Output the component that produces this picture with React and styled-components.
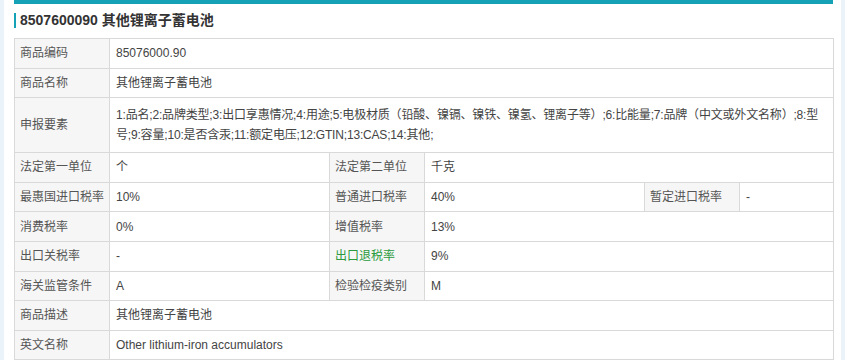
import React from 'react'
import styled, { createGlobalStyle } from 'styled-components'

const GlobalStyle = createGlobalStyle`
  html, body {
    margin: 0;
    padding: 0;
    background: #eaf3f9;
  }
  body {
    font-family: "Liberation Sans", "Noto Sans CJK SC", sans-serif;
    font-size: 12px;
    color: #333;
  }
`

const Page = styled.div`
  margin-left: 4px;
  width: 837px;
  height: 360px;
  overflow: hidden;
  background: #fff;
  padding: 0 8px 0 10px;
  box-sizing: border-box;
`

const TopBar = styled.div`
  height: 4px;
  background: #15a1b6;
`

const Title = styled.h3`
  margin: 9px 0 0;
  height: 15px;
  line-height: 15px;
  border-left: 2px solid #15a1b6;
  padding-left: 4px;
  font-size: 14px;
  font-weight: bold;
  color: #333;
`

const Table = styled.table`
  margin-top: 10px;
  width: 819px;
  border-collapse: collapse;
  table-layout: fixed;
`

const Row = styled.tr`
  height: ${(p) => (p.tall ? '55px' : '29.6px')};
`

const Cell = styled.td`
  border: 1px solid #d9d9d9;
  padding: 0 6px;
  vertical-align: middle;
  line-height: 20px;
  font-size: 12px;
  white-space: nowrap;
  overflow: hidden;
`

const LabelCell = styled(Cell)`
  background: #f6f6f6;
  color: ${(p) => (p.highlight ? '#2a9a3c' : '#555')};
  padding-left: 5px;
  padding-right: 0;
`

const ValueCell = styled(Cell)`
  background: #fff;
  color: #444;
`

const Line = styled.div`
  letter-spacing: -0.18px;
`

const elementLines = [
  '1:品名;2:品牌类型;3:出口享惠情况;4:用途;5:电极材质（铅酸、镍镉、镍铁、镍氢、锂离子等）;6:比能量;7:品牌（中文或外文名称）;8:型',
  '号;9:容量;10:是否含汞;11:额定电压;12:GTIN;13:CAS;14:其他;',
]

export default function App() {
  return (
    <>
      <GlobalStyle />
      <Page>
        <TopBar />
        <Title>8507600090 其他锂离子蓄电池</Title>
        <Table>
          <colgroup>
            <col style={{ width: 95 }} />
            <col style={{ width: 220 }} />
            <col style={{ width: 95 }} />
            <col style={{ width: 220 }} />
            <col style={{ width: 95 }} />
            <col style={{ width: 94 }} />
          </colgroup>
          <tbody>
            <Row>
              <LabelCell>商品编码</LabelCell>
              <ValueCell colSpan={5}>85076000.90</ValueCell>
            </Row>
            <Row>
              <LabelCell>商品名称</LabelCell>
              <ValueCell colSpan={5}>其他锂离子蓄电池</ValueCell>
            </Row>
            <Row tall>
              <LabelCell>申报要素</LabelCell>
              <ValueCell colSpan={5}>
                {elementLines.map((l) => (
                  <Line key={l}>{l}</Line>
                ))}
              </ValueCell>
            </Row>
            <Row>
              <LabelCell>法定第一单位</LabelCell>
              <ValueCell>个</ValueCell>
              <LabelCell>法定第二单位</LabelCell>
              <ValueCell colSpan={3}>千克</ValueCell>
            </Row>
            <Row>
              <LabelCell>最惠国进口税率</LabelCell>
              <ValueCell>10%</ValueCell>
              <LabelCell>普通进口税率</LabelCell>
              <ValueCell>40%</ValueCell>
              <LabelCell>暂定进口税率</LabelCell>
              <ValueCell>-</ValueCell>
            </Row>
            <Row>
              <LabelCell>消费税率</LabelCell>
              <ValueCell>0%</ValueCell>
              <LabelCell>增值税率</LabelCell>
              <ValueCell colSpan={3}>13%</ValueCell>
            </Row>
            <Row>
              <LabelCell>出口关税率</LabelCell>
              <ValueCell>-</ValueCell>
              <LabelCell highlight>出口退税率</LabelCell>
              <ValueCell colSpan={3}>9%</ValueCell>
            </Row>
            <Row>
              <LabelCell>海关监管条件</LabelCell>
              <ValueCell>A</ValueCell>
              <LabelCell>检验检疫类别</LabelCell>
              <ValueCell colSpan={3}>M</ValueCell>
            </Row>
            <Row>
              <LabelCell>商品描述</LabelCell>
              <ValueCell colSpan={5}>其他锂离子蓄电池</ValueCell>
            </Row>
            <Row>
              <LabelCell>英文名称</LabelCell>
              <ValueCell colSpan={5}>Other lithium-iron accumulators</ValueCell>
            </Row>
          </tbody>
        </Table>
      </Page>
    </>
  )
}
